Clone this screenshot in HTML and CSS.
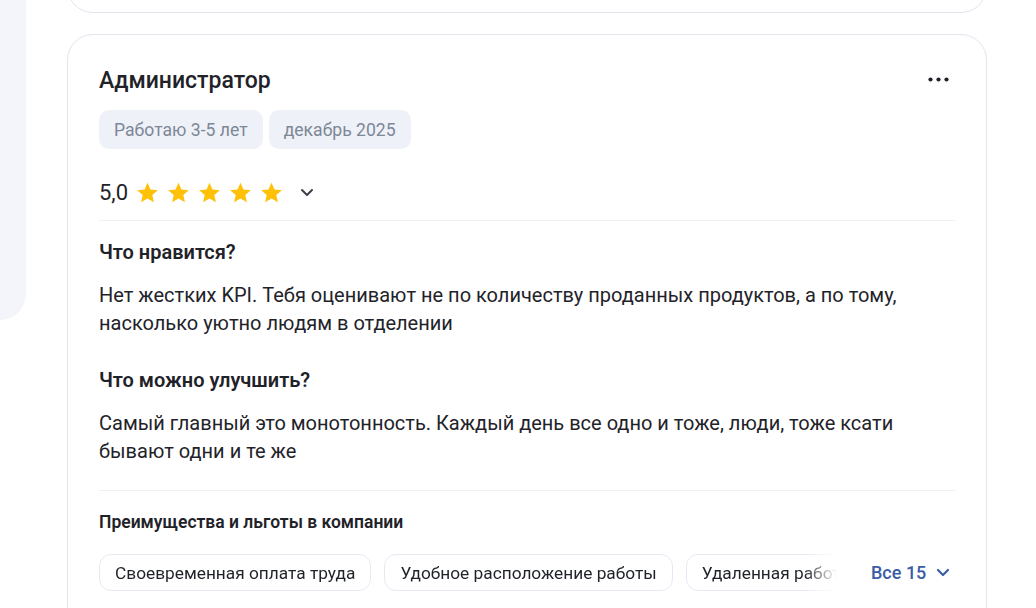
FILE: index.html
```html
<!DOCTYPE html>
<html lang="ru">
<head>
<meta charset="utf-8">
<link rel="stylesheet" href="styles.css">
</head>
<body>
<div class="page">
  <aside class="sidebar"></aside>
  <main class="feed">
    <div class="card card-prev"></div>
    <article class="card review">
      <header class="review-head">
        <h2 class="review-title">Администратор</h2>
        <button class="more" aria-label="Ещё">
          <svg width="21" height="5" viewBox="0 0 21 5"><circle cx="2.5" cy="2.5" r="2.1" fill="#1f2329"/><circle cx="10.5" cy="2.5" r="2.1" fill="#1f2329"/><circle cx="18.5" cy="2.5" r="2.1" fill="#1f2329"/></svg>
        </button>
      </header>
      <div class="tags">
        <span class="tag">Работаю 3-5 лет</span>
        <span class="tag">декабрь 2025</span>
      </div>
      <div class="rating">
        <span class="rating-value">5,0</span>
        <span class="stars">
          <svg class="star" viewBox="0 0 24 24"><path d="M12 1.8l3.1 7.1 7.7.7-5.8 5.1 1.7 7.5L12 18.3l-6.7 3.9 1.7-7.5L1.2 9.6l7.7-.7z"/></svg>
          <svg class="star" viewBox="0 0 24 24"><path d="M12 1.8l3.1 7.1 7.7.7-5.8 5.1 1.7 7.5L12 18.3l-6.7 3.9 1.7-7.5L1.2 9.6l7.7-.7z"/></svg>
          <svg class="star" viewBox="0 0 24 24"><path d="M12 1.8l3.1 7.1 7.7.7-5.8 5.1 1.7 7.5L12 18.3l-6.7 3.9 1.7-7.5L1.2 9.6l7.7-.7z"/></svg>
          <svg class="star" viewBox="0 0 24 24"><path d="M12 1.8l3.1 7.1 7.7.7-5.8 5.1 1.7 7.5L12 18.3l-6.7 3.9 1.7-7.5L1.2 9.6l7.7-.7z"/></svg>
          <svg class="star" viewBox="0 0 24 24"><path d="M12 1.8l3.1 7.1 7.7.7-5.8 5.1 1.7 7.5L12 18.3l-6.7 3.9 1.7-7.5L1.2 9.6l7.7-.7z"/></svg>
        </span>
        <svg class="chev" width="14" height="9" viewBox="0 0 14 9"><path d="M2 2l5 5 5-5" fill="none" stroke="#3c4048" stroke-width="2" stroke-linecap="round" stroke-linejoin="round"/></svg>
      </div>
      <hr class="divider">
      <section class="block">
        <h3 class="block-title">Что нравится?</h3>
        <p class="block-text">Нет жестких KPI. Тебя оценивают не по количеству проданных продуктов, а по тому, насколько уютно людям в отделении</p>
      </section>
      <section class="block block-next">
        <h3 class="block-title">Что можно улучшить?</h3>
        <p class="block-text">Самый главный это монотонность. Каждый день все одно и тоже, люди, тоже ксати бывают одни и те же</p>
      </section>
      <hr class="divider divider-low">
      <h4 class="benefits-title">Преимущества и льготы в компании</h4>
      <div class="benefits">
        <div class="chips">
          <span class="chip">Своевременная оплата труда</span>
          <span class="chip">Удобное расположение работы</span>
          <span class="chip">Удаленная работа</span>
        </div>
        <a class="all" href="#">Все 15
          <svg width="14" height="9" viewBox="0 0 14 9"><path d="M2 2l5 5 5-5" fill="none" stroke="#3b5da5" stroke-width="2.2" stroke-linecap="round" stroke-linejoin="round"/></svg>
        </a>
      </div>
    </article>
  </main>
</div>
</body>
</html>
```

FILE: styles.css
```css
* { box-sizing: border-box; }
html, body { margin: 0; padding: 0; background: #fff; }
body {
  font-family: Roboto, "Liberation Sans", Arial, sans-serif;
  color: #1f2329;
  overflow: hidden;
  height: 608px;
}
.page {
  display: flex;
  align-items: flex-start;
  gap: 41px;
}
.sidebar {
  width: 26px;
  height: 320px;
  flex: none;
  background: #f4f5fa;
  border-bottom-right-radius: 26px;
}
.feed {
  width: 920px;
  flex: none;
  display: flex;
  flex-direction: column;
  gap: 21px;
}
.card {
  background: #fff;
  border: 1px solid #e1e5ec;
  border-radius: 26px;
}
.card-prev {
  height: 60px;
  margin-top: -47px;
}
.review {
  padding: 31px 31px 40px;
  height: 640px;
}
.review-head {
  display: flex;
  align-items: center;
  justify-content: space-between;
}
.review-title {
  margin: 0;
  font-size: 23px;
  line-height: 30px;
  font-weight: 500;
}
.more {
  border: 0;
  background: none;
  padding: 0;
  margin: -4px 6px 0 0;
  display: flex;
}
.tags {
  display: flex;
  gap: 6px;
  margin-top: 14px;
}
.tag {
  height: 39px;
  display: inline-flex;
  align-items: center;
  padding: 0 15px;
  background: #eef1f7;
  color: #7d8797;
  border-radius: 10px;
  font-size: 17.6px;
}
.rating {
  display: flex;
  align-items: center;
  height: 28px;
  margin-top: 29px;
}
.rating-value {
  font-size: 22px;
  font-weight: 400;
  margin-right: 8px;
}
.stars {
  display: flex;
  gap: 8px;
}
.star {
  width: 23px;
  height: 23px;
  fill: #ffc107;
}
.chev {
  margin-left: 17px;
}
.divider {
  border: 0;
  border-top: 1px solid #eef0f4;
  margin: 14px 0 0;
}
.block { margin-top: 18px; }
.block-next { margin-top: 30px; }
.block-title {
  margin: 0;
  font-size: 20px;
  line-height: 26px;
  font-weight: 600;
}
.block-text {
  margin: 16px 0 0;
  font-size: 20px;
  line-height: 28px;
}
.divider-low { margin-top: 25px; }
.benefits-title {
  margin: 19px 0 0;
  font-size: 17.5px;
  line-height: 24px;
  font-weight: 600;
}
.benefits {
  display: flex;
  align-items: center;
  margin-top: 20px;
}
.chips {
  display: flex;
  gap: 13px;
  width: 750px;
  overflow: hidden;
  flex: none;
  -webkit-mask-image: linear-gradient(to right, #000 705px, transparent 738px);
  mask-image: linear-gradient(to right, #000 705px, transparent 738px);
}
.chip {
  flex: none;
  height: 37px;
  display: inline-flex;
  align-items: center;
  padding: 0 15px;
  border: 1px solid #e6e9f2;
  border-radius: 12px;
  font-size: 17.3px;
  color: #1f2329;
  white-space: nowrap;
}
.all {
  margin-left: 22px;
  display: inline-flex;
  align-items: center;
  gap: 10px;
  color: #3b5da5;
  font-size: 18px;
  font-weight: 500;
  text-decoration: none;
}
```
